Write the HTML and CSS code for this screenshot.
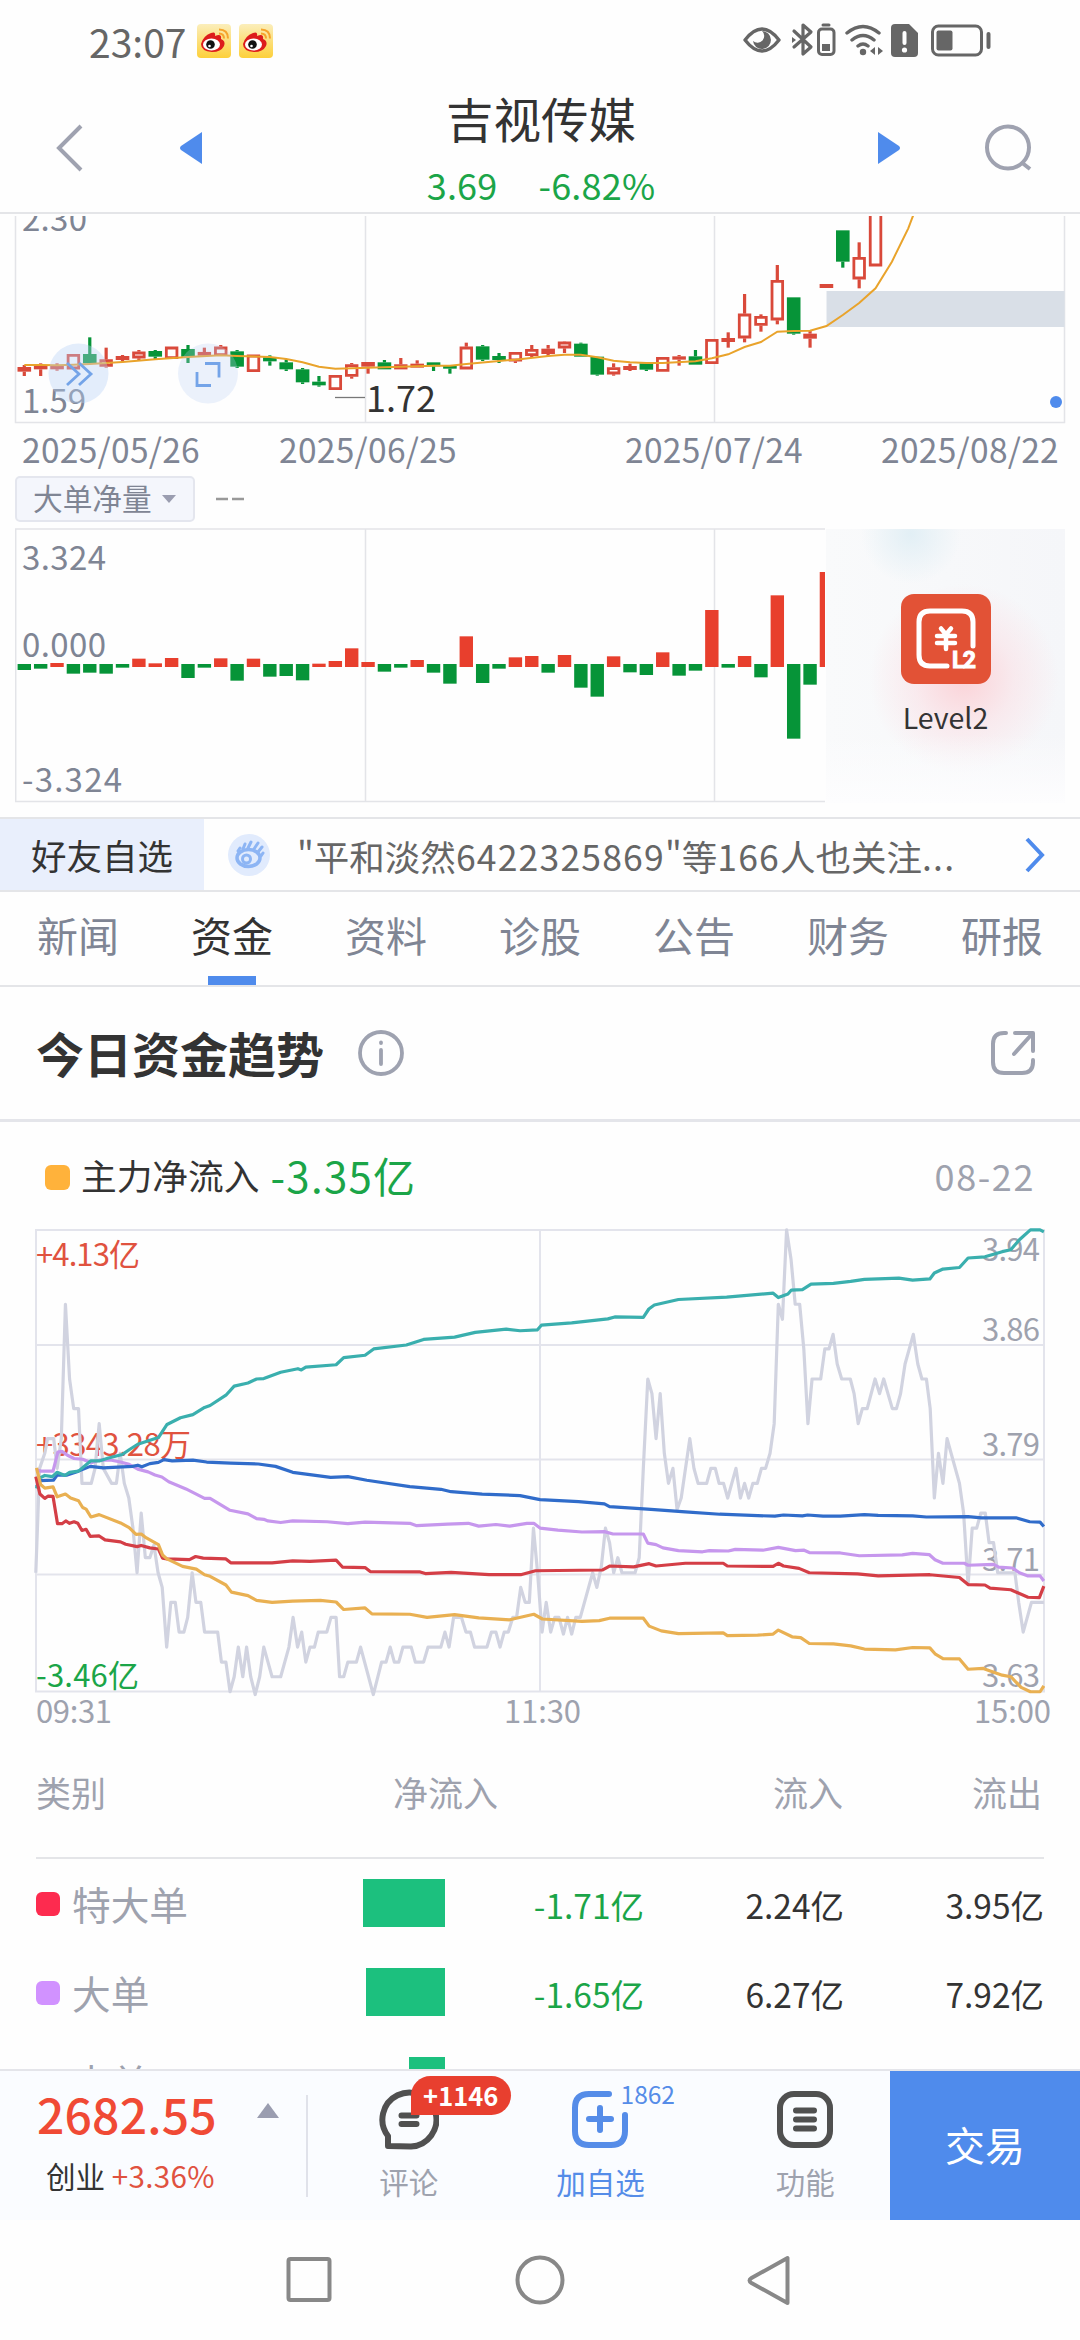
FILE: index.html
```html
<!DOCTYPE html>
<html lang="zh-CN">
<head>
    <meta charset="UTF-8">
    <meta name="viewport" content="width=device-width, initial-scale=1.0">
    <title>吉视传媒 - 资金</title>
    <link rel="stylesheet" href="styles.css">
</head>
<body>
    <div id="app">
        <div class="page">
            <!-- Status bar -->
            <div class="status-bar">
                <span class="clock">23:07</span>
                <svg class="weibo" viewBox="0 0 34 34"><use href="#weibo-logo"/></svg>
                <svg class="weibo" viewBox="0 0 34 34"><use href="#weibo-logo"/></svg>
                <svg class="status-icons" width="250" height="40" viewBox="740 20 250 40" fill="none" stroke="#666" stroke-width="3.4" stroke-linecap="round" stroke-linejoin="round">
                    <path d="M744 40Q761 18 778 40Q761 62 744 40Z"/>
                    <path d="M761 31a9 9 0 1 1-9 10a6 6 0 0 0 9-10z" fill="#666" stroke="none"/>
                    <path d="M793 31l17 16-8 7V25l8 7-17 15" stroke-width="3.2"/>
                    <path d="M791 37l4 3-4 3z" fill="#666" stroke="none"/>
                    <rect x="817.5" y="29" width="15.500" height="25.500" rx="3.5" stroke-width="3"/>
                    <path d="M822 25h6" stroke-width="3"/>
                    <rect x="821" y="44" width="8" height="7" fill="#666" stroke="none"/>
                    <path d="M846 33q16-13 32 0M851 40q11-9 22 0M857 46q5-4 10 0"/>
                    <circle cx="862" cy="52" r="3.2" fill="#666" stroke="none"/>
                    <path d="M874 47v8l-5-4zM877 47v8l5-4z" fill="#666" stroke="none"/>
                    <path d="M894 24h14l9 9v20a4 4 0 0 1-4 4h-19a4 4 0 0 1-4-4V28a4 4 0 0 1 4-4z" fill="#666" stroke="none"/>
                    <path d="M903.500 33v10" stroke="#fff" stroke-width="4"/>
                    <circle cx="903.500" cy="50" r="2.600" fill="#fff" stroke="none"/>
                    <rect x="931.500" y="26" width="49" height="29" rx="6" stroke-width="3"/>
                    <rect x="935.500" y="30.500" width="16" height="20" rx="2" fill="#666" stroke="none"/>
                    <path d="M987.500 34v13" stroke-width="4"/>
                </svg>
            </div>

            <!-- Stock header -->
            <header class="stock-header">
                <svg width="150" height="60" viewBox="54 118 150 60">
                    <path d="M81 126L59 148l22 22" fill="none" stroke="#9fa2b0" stroke-width="4"/>
                    <path d="M202 132v32l-21-14q-2-2 0-4z" fill="#4f8bec"/>
                </svg>
                <div class="stock-title">
                    <h1>吉视传媒</h1>
                    <div class="quote"><span>3.69</span><span>-6.82%</span></div>
                </div>
                <svg width="160" height="60" viewBox="876 118 160 60">
                    <path d="M878 132v32l21-14q2-2 0-4z" fill="#4f8bec"/>
                    <circle cx="1008" cy="147.500" r="21" fill="none" stroke="#9fa2b0" stroke-width="4"/>
                    <path d="M1021 162l9 7" stroke="#9fa2b0" stroke-width="4"/>
                </svg>
            </header>

            <!-- K line -->
            <svg class="kline" width="1080" height="208" viewBox="0 216 1080 208">
                <path d="M15.500 210V422.500H1064.500V210M365.500 210v212M714.500 210v212" fill="none" stroke="#e3e4e8" stroke-width="1.500"/>
                <rect x="826.500" y="291" width="238" height="36" fill="#d9dfe7"/>
                <g id="candles" transform="translate(0 200) scale(1 .33333)"></g>
                <path d="M335 397.500h30" stroke="#777" stroke-width="1.300"/>
                <g class="axis">
                    <text x="22" y="231" textLength="65">2.30</text>
                    <text x="22" y="413" textLength="64">1.59</text>
                    <text x="366" y="412" textLength="70" class="low-mark">1.72</text>
                </g>
                <g fill="#b9d1f6" fill-opacity=".38">
                    <circle cx="78.500" cy="373.500" r="30"/>
                    <circle cx="208" cy="373.500" r="30" fill-opacity=".28"/>
                </g>
                <g fill="none" stroke="#74a4e8" stroke-width="2.800">
                    <path d="M67 363l12 11-12 11M79 363l12 11-12 11"/>
                    <path d="M205 363.500h14v14M197 372v13.500h14"/>
                </g>
                <circle cx="1056" cy="402" r="6" fill="#4f8bec"/>
            </svg>
            <div class="dates">
                <span>2025/05/26</span><span>2025/06/25</span><span>2025/07/24</span><span>2025/08/22</span>
            </div>

            <!-- Net volume -->
            <div class="indicator-row">
                <div class="indicator">大单净量<i class="caret"></i></div>
                <svg width="30" height="6"><path d="M1 3h12M17 3h12" stroke="#999" stroke-width="2.500"/></svg>
            </div>
            <div class="volume">
                <svg width="810" height="275" viewBox="15 528 810 275">
                    <path d="M826 529H15.700V801.500H826M365.500 529v272M714.500 529v272" fill="none" stroke="#e3e4e8" stroke-width="1.500"/>
                    <g id="bars" transform="translate(0 520) scale(1 .33333)"></g>
                    <g class="axis">
                        <text x="22" y="570" textLength="84">3.324</text>
                        <text x="22" y="657" textLength="84">0.000</text>
                        <text x="22" y="792" textLength="100">-3.324</text>
                    </g>
                </svg>
                <div class="level2">
                    <svg width="90" height="90" viewBox="0 0 90 90">
                        <rect width="90" height="90" rx="13" fill="#e25236"/>
                        <path d="M46 72H29q-11 0-11-11V28q0-11 11-11h32q11 0 11 11v24" fill="none" stroke="#fff" stroke-width="5" stroke-linecap="round"/>
                        <path d="M40 34.500l5 6 5-6M36 42h18M36 49h18M45 40v15" fill="none" stroke="#fff" stroke-width="4.500" stroke-linecap="round"/>
                        <text x="51" y="74" class="l2-mark" textLength="24">L2</text>
                    </svg>
                    <span>Level2</span>
                </div>
            </div>

            <!-- Friends -->
            <div class="friends">
                <div class="friends-label">好友自选</div>
                <svg width="42" height="42" viewBox="0 0 42 42">
                    <circle cx="21" cy="21" r="21" fill="#e1ebfd"/>
                    <ellipse cx="20.500" cy="24" rx="11.500" ry="8.500" fill="none" stroke="#8db5f4" stroke-width="3.500"/>
                    <circle cx="18.500" cy="25" r="4" fill="none" stroke="#8db5f4" stroke-width="3"/>
                    <path d="M10 17l2-3M15 15l2-5M20 14l3-6M26 15l4-6M30 18l4-5M33 22l2-3" stroke="#8db5f4" stroke-width="3" stroke-linecap="round"/>
                </svg>
                <span class="friends-text">"平和淡然<b>6422325869</b>"等<b>166</b>人也关注<b>...</b></span>
                <svg class="more" width="24" height="40" viewBox="0 0 24 40"><path d="M3 4l15 16L3 36" fill="none" stroke="#4f8bec" stroke-width="4"/></svg>
            </div>

            <nav class="tabs">
                <a>新闻</a><a class="active">资金</a><a>资料</a><a>诊股</a><a>公告</a><a>财务</a><a>研报</a>
            </nav>

            <div class="section-head">
                <h2>今日资金趋势</h2>
                <svg width="46" height="46" viewBox="0 0 46 46" fill="none" stroke="#9ea2b0" stroke-width="3.800" stroke-linecap="round">
                    <circle cx="23" cy="23" r="21"/>
                    <path d="M23 20v14M23 12.500v.5"/>
                </svg>
                <svg class="share" width="48" height="48" viewBox="0 0 48 48" fill="none" stroke="#9ea2b0" stroke-width="4" stroke-linecap="round" stroke-linejoin="round">
                    <path d="M17 4h-2Q4 4 4 15v18q0 11 11 11h18q11 0 11-11v-2M26 4h18v18M43 5L25 25"/>
                </svg>
            </div>

            <!-- Money flow -->
            <div class="legend">
                <i class="dot main"></i>
                <span class="legend-name">主力净流入</span>
                <span class="legend-value">-3.35亿</span>
                <span class="legend-date">08-22</span>
            </div>
            <svg class="flow" width="1080" height="500" viewBox="0 1228 1080 500">
                <path d="M36 1230H1044V1691.500H36ZM36 1345H1044M36 1459.500H1044M36 1574.500H1044M540 1230v461" fill="none" stroke="#e3e4ec" stroke-width="2"/>
                <g class="flow-axis">
                    <text x="36" y="1266" textLength="104" class="up">+4.13亿</text>
                    <text x="36" y="1456" textLength="155" class="up">+3343.28万</text>
                    <text x="36" y="1687" textLength="103" class="down">-3.46亿</text>
                    <text x="982" y="1261" textLength="58">3.94</text>
                    <text x="982" y="1341" textLength="58">3.86</text>
                    <text x="982" y="1456" textLength="58">3.79</text>
                    <text x="982" y="1571" textLength="58">3.71</text>
                    <text x="982" y="1687" textLength="58">3.63</text>
                    <text x="36" y="1723" textLength="76">09:31</text>
                    <text x="504" y="1723" textLength="77">11:30</text>
                    <text x="974" y="1723" textLength="77">15:00</text>
                </g>
                <g id="flow-lines" transform="translate(0 1120) scale(.34439 .39541)"></g>
            </svg>

            <div class="orders">
                <div class="order-row order-head">
                    <span>类别</span><span class="net">净流入</span><span>流入</span><span>流出</span>
                </div>
                <div class="order-row">
                    <span class="kind"><i class="dot huge"></i>特大单</span>
                    <span class="bar-cell"><i class="bar" style="width: 82px"></i></span>
                    <span class="amount down">-1.71亿</span><span class="amount">2.24亿</span><span class="amount">3.95亿</span>
                </div>
                <div class="order-row">
                    <span class="kind"><i class="dot large"></i>大单</span>
                    <span class="bar-cell"><i class="bar" style="width: 79px"></i></span>
                    <span class="amount down">-1.65亿</span><span class="amount">6.27亿</span><span class="amount">7.92亿</span>
                </div>
                <div class="order-row">
                    <span class="kind"><i class="dot"></i>中单</span>
                    <span class="bar-cell"><i class="bar" style="width: 36px"></i></span>
                </div>
            </div>
        </div>

        <!-- Bottom toolbar -->
        <footer class="toolbar">
            <div class="index">
                <div class="index-value">2682.55<i class="caret-up"></i></div>
                <div class="index-name">创业 <em>+3.36%</em></div>
            </div>
            <div class="tool">
                <svg width="60" height="62" viewBox="0 0 60 62" fill="none" stroke="#505050" stroke-width="6" stroke-linecap="round">
                    <path d="M9 57V47A27 27 0 1 1 32 57.500Z" stroke-linejoin="round"/>
                    <path d="M22.500 26.500h15M22.500 35h15"/>
                </svg>
                <span class="badge">+1146</span>
                <span>评论</span>
            </div>
            <div class="tool add">
                <svg width="58" height="62" viewBox="0 0 58 62" fill="none" stroke="#558ce8" stroke-width="6" stroke-linecap="round">
                    <path d="M38 5H18Q4 5 4 19V42Q4 56 18 56H40Q54 56 54 42V26M29 19v22M18 30h22"/>
                </svg>
                <span class="count">1862</span>
                <span>加自选</span>
            </div>
            <div class="tool">
                <svg width="58" height="62" viewBox="0 0 58 62" fill="none" stroke="#505050" stroke-width="6" stroke-linecap="round">
                    <rect x="4" y="5" width="50" height="51" rx="14"/>
                    <path d="M20 21.500h18M20 30.500h18M20 39.500h18"/>
                </svg>
                <span>功能</span>
            </div>
            <button class="trade">交易</button>
        </footer>
        <div class="sys-nav">
            <svg width="1080" height="120" viewBox="0 2220 1080 120" fill="none" stroke="#888" stroke-width="4" stroke-linejoin="round">
                <rect x="288.500" y="2259" width="41" height="41" rx="2"/>
                <circle cx="540" cy="2280" r="22.500"/>
                <path d="M787.500 2258v45l-36-20q-4-2.500 0-5z"/>
            </svg>
        </div>
    </div>

    <svg width="0" height="0" class="defs">
        <defs>
            <linearGradient id="weibo-bg" x2="0" y2="1"><stop stop-color="#fbeebb"/><stop offset="1" stop-color="#fdd03a"/></linearGradient>
            <symbol id="weibo-logo" viewBox="0 0 34 34">
                <rect width="34" height="34" rx="4" fill="url(#weibo-bg)"/>
                <path d="M4 20Q6 12 14 9q5-2 4 3 7-3 6 3 5 2 3 7-3 6-12 6Q4 27 4 20z" fill="#dd1c1c"/>
                <ellipse cx="14.500" cy="20.500" rx="8.500" ry="6" fill="#fff"/>
                <circle cx="13.500" cy="20.500" r="4.300" fill="#111"/>
                <circle cx="12.500" cy="22" r="1.300" fill="#fff"/>
                <path d="M22 9.500q5 0 5 5M22 5.500q9 0 9 9" fill="none" stroke="#f6a42c" stroke-width="2"/>
            </symbol>
        </defs>
    </svg>
    <script src="charts.js"></script>
</body>
</html>
```
FILE: styles.css
```css
* { margin: 0; padding: 0; box-sizing: border-box; }
body {
    font-family: "Noto Sans CJK SC", Roboto, sans-serif;
    background: #fefefe; color: #333; width: 1080px;
}
i, em { font-style: normal; }
svg { display: block; flex: none; }
.defs { position: absolute; }

#app { width: 1080px; height: 2340px; overflow: hidden; }
.page { height: 2069px; overflow: hidden; }

.status-bar { display: flex; height: 80px; padding: 24px 89px 0 89px; }
.clock { font-size: 39px; line-height: 34px; color: #666; width: 108px; }
.weibo { width: 34px; height: 34px; margin-right: 8px; }
.status-icons { margin: -4px 0 0 auto; }

.stock-header {
    display: flex; justify-content: space-between; height: 134px;
    padding: 38px 44px 0 54px; border-bottom: 2px solid #e4e5e8;
}
.stock-title { text-align: center; margin: -24px 0 0 2px; }
.stock-title h1 { font-size: 47.5px; font-weight: 400; line-height: 48px; }
.quote { display: flex; justify-content: center; gap: 41px; font-size: 36px; line-height: 40px; margin-top: 22px; color: #1ba548; letter-spacing: 0.2px; }

.kline { margin-top: 2px; }
.axis text { font-size: 33px; fill: #7f8594; }
.axis .low-mark { font-size: 36px; fill: #333; }
.dates {
    display: grid; grid-template-columns: 257px 346px 256px auto;
    padding-left: 22px; height: 52px; line-height: 49px;
    font-size: 33.5px; color: #7f8594; letter-spacing: 0.3px;
}

.indicator-row { display: flex; align-items: center; height: 46px; padding-left: 15px; gap: 20px; }
.indicator {
    display: flex; align-items: center; width: 180px; height: 46px; padding: 0 0 3px 16px;
    border: 2px solid #e4e6ee; border-radius: 5px; background: #f4f6fc;
    font-size: 29.7px; color: #7f8594;
}
.caret { margin: 3px 0 0 10px; border: 7.5px solid transparent; border-top: 8px solid #9a9db0; border-bottom: 0; }

.volume { display: flex; padding: 6px 0 0 15px; height: 295px; }
.level2 {
    width: 239px; height: 274px; padding-top: 65px; margin-top: 1px; margin-left: 1px;
    display: flex; flex-direction: column; align-items: center;
    font-size: 28.5px; line-height: 66px;
    background:
        linear-gradient(to bottom, transparent 75%, #fdfdfe),
        radial-gradient(circle at 138px 150px, #fbd3d8, rgba(250, 225, 230, .6) 50px, transparent 95px),
        radial-gradient(circle at 85px 5px, #e2eff5, transparent 50px),
        linear-gradient(to right, #f9fafb, #f5f6f9);
}
.l2-mark { font: bold 23px Roboto, sans-serif; fill: #fff; stroke: #fff; stroke-width: 1; }

.friends {
    display: flex; align-items: center; height: 75px;
    border-top: 2px solid #e4e5e8; border-bottom: 2px solid #e4e5e8;
    font-size: 35.5px;
}
.friends-label { width: 204px; height: 71px; line-height: 72px; text-align: center; background: #e9effc; margin-right: 24px; }
.friends-text { margin-left: 27px; color: #666; white-space: nowrap; padding-top: 1px; }
.friends-text b { font-weight: 400; letter-spacing: 1.2px; }
.more { margin: 0 32px 0 auto; }

.tabs { display: grid; grid-template-columns: repeat(7, 154px); justify-content: center; height: 95px; border-bottom: 2px solid #e4e5e8; }
.tabs a { position: relative; font-size: 41px; line-height: 85px; color: #7f8594; text-align: center; }
.tabs .active { color: #333; }
.tabs .active::after {
    content: ""; position: absolute; left: 53px; bottom: 0;
    width: 48px; height: 9px; background: #4f8bec;
}

.section-head {
    display: flex; align-items: center; height: 135px; padding: 0 43px 0 36px;
    border-bottom: 3px solid #e4e5ea;
}
.section-head h2 { font-size: 48px; line-height: 60px; margin-right: 34px; padding-bottom: 3px; }
.section-head .share { margin-left: auto; }

.legend { display: flex; align-items: center; height: 106px; padding: 5px 45px 0; }
.dot { width: 24px; height: 24px; border-radius: 6px; background: #4f8bec; flex: none; }
.dot.main { width: 25px; height: 25px; background: #ffb23b; }
.dot.huge { background: #fd2b4f; }
.dot.large { background: #d192ff; }
.legend > span { line-height: 46px; margin-top: -5px; }
.legend-name { font-size: 35.7px; margin-left: 11px; }
.legend-value { font-size: 42px; margin-left: 11px; color: #1ba548; letter-spacing: 1.3px; }
.legend-date { font-size: 36px; margin-left: auto; color: #9ea2ae; letter-spacing: 1.6px; }

.flow-axis text { font-size: 31px; fill: #9ea2ae; }
.flow-axis .up { fill: #e0523f; }
.flow-axis .down, .down { fill: #1ba548; color: #1ba548; }

.orders { padding: 0 36px; font-size: 33.5px; }
.order-row {
    display: grid; grid-template-columns: 250px 159px 199px 200px 200px;
    height: 89px; align-items: center; text-align: right; line-height: 50px;
}
.order-head {
    grid-template-columns: 250px 212px 345px 199px;
    height: 131px; border-bottom: 2px solid #e4e5e8; color: #9ea2ae; font-size: 35px;
    padding: 0 2px 2px 0;
}
.order-head span:first-child { text-align: left; }
.kind { display: flex; align-items: center; gap: 12px; font-size: 38.7px; color: #9ea2ae; height: 84px; margin-top: -1px; }
.kind .dot { margin-top: 1px; }
.amount { padding-top: 2px; }
.bar-cell { display: flex; justify-content: flex-end; }
.bar { height: 48px; background: #1cc07e; margin-top: -2px; }

.toolbar {
    display: flex; height: 151px; background: #fafcff; border-top: 2px solid #e4e5ea;
}
.index { width: 308px; padding: 9px 0 0 37px; position: relative; }
.index::after { content: ""; position: absolute; right: 0; top: 24px; width: 2px; height: 102px; background: #e0e2ea; }
.index-value { display: flex; align-items: center; font-size: 48px; font-weight: 500; line-height: 66px; color: #f04a35; letter-spacing: 0.2px; }
.caret-up { margin: 0 0 6px 40px; border: 11px solid transparent; border-bottom: 15px solid #9a9db0; border-top: 0; }
.index-name { padding: 3px 0 0 9px; font-size: 29.6px; line-height: 54px; }
.index-name em { color: #e0523f; letter-spacing: 0.3px; }
.tool {
    position: relative; display: flex; flex-direction: column; align-items: center;
    width: 202px; padding-top: 18px; font-size: 29.5px; line-height: 61px; color: #9ea2ae;
}
.tool.add { width: 182px; color: #558ce8; }
.tool.add + .tool { width: 199px; padding-left: 29px; }
.badge {
    position: absolute; left: 103px; top: 5px; width: 100px; height: 39px;
    border-radius: 20px 20px 20px 0; background: #e83f2f; color: #fff;
    font-size: 25.5px; font-weight: 700; line-height: 38px; text-align: center;
}
.count { position: absolute; left: 111px; top: 5px; font-size: 24.5px; line-height: 36px; }
.trade { margin-left: auto; width: 190px; padding-bottom: 3px; border: 0; background: #4f8bec; color: #fff; font: 40px/140px "Noto Sans CJK SC", sans-serif; }
.sys-nav { height: 120px; background: #fefefe; }
```
FILE: charts.js
```js
const NS = 'http://www.w3.org/2000/svg';
const RED = '#d9493a', GREEN = '#069438';
const slot = i => 24.3 + 16.37 * i;

function add(parent, tag, attrs) {
    const el = document.createElementNS(NS, tag);
    for (const k in attrs) el.setAttribute(k, attrs[k]);
    parent.appendChild(el);
    return el;
}

// type (r = red solid, h = red hollow, g = green), high, top, bottom, low
const candles = [
    ['r',495,501,515,528],['r',490,498,508,528],['r',490,496,508,512],['h',462,462,508,508],['g',412,462,490,490],
    ['h',443,478,500,503],['r',465,468,480,485],['h',450,455,475,480],['g',450,453,470,480],['h',440,440,477,477],
    ['g',435,447,470,489],['h',443,456,467,467],['h',435,440,468,468],['g',450,454,500,504],['h',464,464,516,516],
    ['g',466,472,484,497],['g',478,487,508,513],['g',504,508,547,552],['g',528,545,556,560],['h',525,525,570,570],
    ['h',489,493,530,536],['r',486,486,500,521],['g',480,487,508,508],['h',474,493,508,508],['r',481,491,503,503],
    ['g',487,487,499,513],['g',495,498,506,521],['h',428,440,508,508],['g',435,439,479,483],['g',459,468,480,489],
    ['h',456,456,484,489],['h',435,447,468,472],['r',435,446,462,468],['h',424,425,445,459],['g',428,431,470,470],
    ['g',470,470,524,527],['h',490,502,523,527],['r',491,498,510,513],['g',490,490,509,513],['h',471,471,515,515],
    ['r',465,469,479,497],['g',450,469,494,494],['h',417,417,492,492],['r',397,414,426,443],['h',282,341,415,427],
    ['h',343,348,377,395],['h',195,240,361,373],['g',292,292,401,404],['r',393,401,416,443],['r',252,252,264,264],
    ['g',91,91,185,203],['h',127,171,238,265],['h',20,20,199,199]
];

const ma = [
    [0,495],[1,495],[2,496],[3,494],[4,492],[6,486],[8,478],[10,471],[12,466],[13,468],[15,471],[16,477],[17,487],
    [18,500],[19,506],[20,505],[21,503],[25,497],[26,497],[27,492],[29,483],[30,479],[32,468],[33,464],[34,464],
    [35,472],[36,482],[37,487],[38,489],[39,489],[41,484],[42,475],[43,463],[44,441],[45,426],[46,395],[47,393],
    [48,392],[49,378],[50,345],[51,309],[52,265],[53,185],[54,85],[54.5,20]
];

const k = document.getElementById('candles');
candles.forEach(([type, high, top, bottom, low], i) => {
    const x = slot(i), color = type === 'g' ? GREEN : RED;
    if (high < top) add(k, 'rect', { x: x - 1.6, y: high, width: 3.2, height: top - high, fill: color });
    if (low > bottom) add(k, 'rect', { x: x - 1.6, y: bottom, width: 3.2, height: low - bottom, fill: color });
    if (type === 'h') {
        add(k, 'rect', { x: x - 5.3, y: top + 4, width: 10.6, height: Math.max(bottom - top - 8, 3),
            fill: '#fff', stroke: color, 'stroke-width': 2.8, 'vector-effect': 'non-scaling-stroke' });
    } else {
        add(k, 'rect', { x: x - 6.8, y: top, width: 13.6, height: bottom - top, fill: color });
    }
});
add(k, 'polyline', { points: ma.map(p => slot(p[0]) + ',' + p[1]).join(' '), fill: 'none',
    stroke: '#e9a32b', 'stroke-width': 2, 'vector-effect': 'non-scaling-stroke' });

// positive = buy side (tip above the axis), negative = sell side
const volume = [
    -450,-446,429,-461,-458,-461,-443,416,430,414,-474,-443,415,-482,416,-470,-468,-481,431,423,385,426,-455,-443,
    420,-458,-491,349,-489,-446,412,408,-458,405,-503,-530,409,-457,-465,397,-467,-452,270,-443,408,-472,226,-656,-494,156
];
const bars = document.getElementById('bars');
volume.forEach((v, i) => {
    const y = v > 0 ? v : 432;
    const h = v > 0 ? 441 - v : -v - 432;
    add(bars, 'rect', { x: slot(i) - 6.7, y: y, width: 13.4, height: h, fill: v > 0 ? '#e83f2d' : GREEN });
});

// price, then the order flows
const lines = [
    ['#d1d3e0', '104,1145 115,881 130,843 138,806 156,806 166,881 178,806 190,466 202,655 214,730 228,730 238,919 265,919 276,881 288,768 300,881 324,919 338,919 349,843 361,919 374,956 386,1032 398,1145 410,994 422,1107 435,1107 447,1075 459,1145 471,1182 484,1333 496,1220 509,1220 520,1295 534,1295 545,1258 558,1145 569,1220 583,1220 594,1295 632,1295 643,1371 656,1371 668,1446 680,1408 692,1333 705,1408 716,1333 728,1408 741,1453 754,1408 766,1333 790,1408 815,1408 839,1333 851,1258 864,1333 876,1295 888,1371 900,1333 913,1333 924,1295 949,1295 961,1258 976,1258 986,1408 998,1408 1010,1371 1035,1371 1047,1333 1084,1453 1108,1371 1121,1371 1133,1333 1145,1371 1158,1371 1170,1333 1194,1333 1206,1371 1230,1371 1243,1333 1280,1333 1292,1295 1304,1333 1317,1258 1340,1258 1353,1295 1366,1295 1378,1333 1414,1333 1427,1295 1440,1295 1452,1333 1464,1295 1476,1295 1489,1258 1500,1258 1512,1182 1525,1220 1537,1220 1549,1032 1561,1145 1574,1295 1586,1220 1599,1295 1611,1258 1623,1258 1636,1300 1648,1258 1660,1300 1672,1258 1685,1258 1721,1145 1733,1182 1746,1130 1758,1032 1770,1069 1782,1145 1794,1107 1806,1145 1844,1145 1856,1107 1868,881 1881,655 1893,692 1905,806 1917,692 1929,843 1941,919 1954,881 1966,985 1978,956 2003,806 2015,881 2027,919 2052,919 2064,881 2077,881 2088,919 2101,919 2113,956 2137,881 2150,956 2162,919 2174,956 2186,919 2199,919 2211,881 2223,881 2236,843 2248,768 2260,466 2272,504 2284,278 2297,353 2309,466 2322,466 2334,579 2346,768 2358,655 2383,655 2395,579 2407,579 2419,542 2431,617 2444,655 2469,655 2480,692 2492,768 2504,730 2518,730 2541,655 2554,692 2566,655 2591,730 2603,730 2615,692 2628,617 2652,542 2665,617 2677,655 2690,655 2701,730 2713,956 2725,843 2738,919 2750,806 2786,919 2798,994 2811,1175 2823,1032 2836,1032 2848,994 2861,994 2872,1069 2885,1069 2897,1145 2947,1145 2958,1220 2971,1295 2995,1220 3031,1220'],
    ['#c697ed', '108,885 118,888 154,888 168,840 180,838 196,848 215,856 240,858 265,867 290,860 320,860 350,865 375,871 400,883 430,890 450,898 470,903 490,915 540,933 594,957 610,957 668,987 720,996 745,1008 766,1010 778,1014 815,1018 850,1014 950,1016 1010,1021 1060,1017 1190,1020 1210,1026 1300,1022 1360,1020 1390,1027 1440,1023 1480,1027 1530,1020 1550,1020 1568,1032 1620,1037 1690,1042 1755,1041 1780,1047 1868,1047 1881,1070 1905,1074 1925,1082 1970,1089 2040,1092 2060,1089 2115,1090 2135,1086 2215,1088 2260,1081 2310,1089 2335,1088 2350,1094 2440,1095 2495,1102 2620,1100 2650,1096 2698,1099 2715,1112 2738,1121 2800,1121 2811,1126 2885,1124 2900,1131 2940,1133 2960,1145 2985,1153 3020,1153 3031,1166'],
    ['#306cca', '106,928 116,912 155,911 166,898 195,898 228,888 262,876 300,880 385,876 400,873 412,877 435,869 460,866 476,859 500,862 560,860 600,865 670,868 750,870 800,876 850,891 960,904 1010,902 1065,911 1190,927 1280,934 1310,940 1400,946 1510,950 1568,960 1680,965 1755,971 1770,978 1880,984 1990,991 2090,997 2250,1002 2275,999 2330,1001 2345,999 2390,1002 2440,1002 2510,998 2550,1000 2650,1001 2690,1004 2811,1003 2850,1006 2950,1006 2990,1016 3020,1017 3031,1028'],
    ['#3aafae', '106,932 116,905 130,899 152,902 166,891 188,899 202,891 228,888 264,862 290,862 315,855 355,846 375,834 400,820 460,803 485,770 524,753 560,745 594,727 610,722 656,696 680,673 720,665 745,655 766,654 815,638 865,629 875,632 888,625 976,619 998,601 1060,595 1085,579 1180,569 1230,555 1320,549 1380,537 1470,529 1510,533 1560,531 1572,519 1660,513 1765,503 1785,498 1868,499 1884,478 1900,468 1970,454 2110,448 2245,438 2260,449 2288,440 2298,430 2330,429 2355,415 2420,413 2470,408 2510,403 2610,400 2650,405 2700,402 2713,387 2738,377 2786,373 2811,349 2860,346 2910,333 2935,328 2960,303 2992,278 3020,278 3031,283'],
    ['#d43e46', '104,902 116,946 130,957 140,951 154,952 167,1021 180,1021 191,1014 202,1020 215,1016 226,1020 238,1038 250,1035 262,1053 288,1052 305,1062 350,1067 365,1073 398,1079 410,1076 435,1082 460,1085 472,1108 485,1110 550,1112 568,1104 590,1108 656,1110 670,1120 790,1120 850,1115 900,1116 976,1113 995,1131 1060,1132 1075,1142 1220,1143 1235,1147 1310,1144 1420,1150 1512,1150 1555,1140 1750,1138 1770,1128 1840,1130 1885,1122 1905,1128 1990,1121 2100,1121 2112,1128 2245,1129 2260,1121 2275,1128 2320,1134 2350,1145 2490,1148 2550,1153 2700,1150 2786,1157 2811,1175 2860,1176 2875,1184 2935,1188 2985,1207 3018,1208 3031,1179'],
    ['#e9b052', '106,880 118,922 130,931 154,928 166,953 190,946 205,956 228,963 240,980 250,984 264,1004 288,998 350,1019 375,1031 395,1048 410,1047 425,1057 460,1074 472,1100 485,1110 530,1129 570,1136 594,1150 610,1154 656,1176 672,1194 720,1203 745,1215 790,1220 850,1217 930,1215 976,1219 998,1238 1060,1234 1080,1249 1190,1250 1240,1258 1320,1251 1390,1259 1480,1264 1550,1250 1575,1262 1690,1268 1740,1266 1770,1260 1868,1260 1885,1280 1920,1292 1970,1299 2100,1297 2112,1304 2200,1303 2245,1300 2260,1290 2300,1307 2325,1309 2350,1324 2420,1325 2470,1330 2510,1338 2600,1340 2650,1334 2700,1335 2715,1350 2738,1362 2786,1363 2811,1389 2855,1387 2910,1404 2935,1408 2965,1435 2992,1446 3020,1446 3031,1431']
];
const flow = document.getElementById('flow-lines');
lines.forEach(([color, points]) => {
    add(flow, 'polyline', { points: points, fill: 'none', stroke: color, 'stroke-width': 3.2,
        'vector-effect': 'non-scaling-stroke', 'stroke-linejoin': 'round' });
});
```
